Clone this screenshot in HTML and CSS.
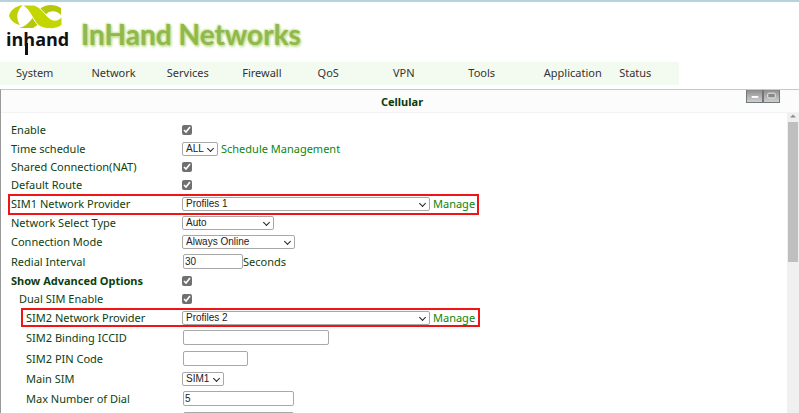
FILE: index.html
```html
<!DOCTYPE html>
<html lang="en">
<head>
<meta charset="utf-8">
<title>InHand Networks - Cellular</title>
<link rel="stylesheet" href="styles.css">
</head>
<body>
<header class="banner">
  <div class="logo">
    <svg class="logo-mark" viewBox="0 0 54 24" aria-hidden="true">
      <path fill="#bdd008" d="M14 0C6 1 1 6 0 11C2 16 6 19 11 20C7 14 7 6 14 0Z"/>
      <path fill="#b4c80c" d="M10 23H24C32 19 34 10 40 7C45 5 49 7 52 10V3C46-1 36-1 31 4C24 11 20 21 10 23Z"/>
      <path fill="#c3d600" stroke="#fff" stroke-width="1" d="M13 0H25C34 3 37 13 44 15C48 16 50 14 53 12V20C47 25 35 25 29 20C23 14 21 4 13 0Z"/>
    </svg>
    <span class="logo-word">inhand</span>
  </div>
  <h1 class="brand">InHand Networks</h1>
</header>
<nav class="menu">
  <a href="#system">System</a><a href="#network">Network</a><a href="#services">Services</a><a href="#firewall">Firewall</a><a href="#qos">QoS</a><a href="#vpn">VPN</a><a href="#tools">Tools</a><a href="#application">Application</a><a href="#status">Status</a>
</nav>
<main class="panel">
  <div class="titlebar">
    <h2>Cellular</h2>
    <div class="window-buttons">
      <button type="button" aria-label="Minimize"><svg viewBox="0 0 16 12"><path d="M5 7h7" stroke="#fff" stroke-width="2"/></svg></button><button type="button" aria-label="Maximize"><svg viewBox="0 0 16 12"><rect x="4" y="3" width="8" height="5" rx="1" fill="#888" stroke="#eee"/></svg></button>
    </div>
  </div>
  <div class="body">
    <form class="form">
      <div class="row"><label for="enable">Enable</label><div class="field"><input type="checkbox" id="enable" checked></div></div>
      <div class="row pick"><label for="schedule">Time schedule</label><div class="field"><span class="select w-mini"><select id="schedule"><option>ALL</option></select></span><a href="#schedule">Schedule Management</a></div></div>
      <div class="row"><label for="nat">Shared Connection(NAT)</label><div class="field"><input type="checkbox" id="nat" checked></div></div>
      <div class="row"><label for="route">Default Route</label><div class="field"><input type="checkbox" id="route" checked></div></div>
      <div class="row pick marked"><label for="sim1">SIM1 Network Provider</label><div class="field"><span class="select w-wide"><select id="sim1"><option>Profiles 1</option></select></span><a href="#profiles">Manage</a></div></div>
      <div class="row pick"><label for="type">Network Select Type</label><div class="field"><span class="select w-small"><select id="type"><option>Auto</option></select></span></div></div>
      <div class="row pick"><label for="mode">Connection Mode</label><div class="field"><span class="select w-medium"><select id="mode"><option>Always Online</option></select></span></div></div>
      <div class="row entry"><label for="redial">Redial Interval</label><div class="field"><input type="text" class="i-mini" id="redial" value="30"><span>Seconds</span></div></div>
      <div class="row"><label class="strong" for="advanced">Show Advanced Options</label><div class="field"><input type="checkbox" id="advanced" checked></div></div>
      <div class="row"><label class="sub" for="dual">Dual SIM Enable</label><div class="field"><input type="checkbox" id="dual" checked></div></div>
      <div class="row pick marked nested"><label class="subsub" for="sim2">SIM2 Network Provider</label><div class="field"><span class="select w-wide"><select id="sim2"><option>Profiles 2</option></select></span><a href="#profiles">Manage</a></div></div>
      <div class="row entry"><label class="subsub" for="iccid">SIM2 Binding ICCID</label><div class="field"><input type="text" class="i-wide" id="iccid"></div></div>
      <div class="row entry"><label class="subsub" for="pin">SIM2 PIN Code</label><div class="field"><input type="text" class="i-small" id="pin"></div></div>
      <div class="row pick"><label class="subsub" for="main">Main SIM</label><div class="field"><span class="select w-tiny"><select id="main"><option>SIM1</option></select></span></div></div>
      <div class="row entry"><label class="subsub" for="dial">Max Number of Dial</label><div class="field"><input type="text" class="i-medium" id="dial" value="5"></div></div>
      <div class="row entry"><span></span><div class="field"><input type="text" class="i-medium" aria-label="Next setting"></div></div>
    </form>
    <div class="scrollbar" aria-hidden="true"><svg class="arrow" viewBox="0 0 12 9"><path d="M3 6L6 3L9 6Z" fill="#8c8c8c"/></svg><div class="thumb"></div></div>
  </div>
</main>
</body>
</html>
```
FILE: styles.css
```css
*, *::before, *::after { box-sizing: border-box; }
body {
  margin: 0;
  height: 100vh;
  overflow: hidden;
  display: flex;
  flex-direction: column;
  background: #fff;
  color: #0d3f10;
  font: 11px/18px "Noto Sans", sans-serif;
}
a { color: #0c860c; text-decoration: none; }

.banner {
  flex: none;
  display: flex;
  gap: 11px;
  height: 60px;
  padding: 3px 0 0 6px;
  border-top: 2px solid #b4d3da;
  margin-bottom: 2px;
}
.logo { position: relative; width: 64px; }
.logo-mark { display: block; width: 54px; height: 24px; margin-left: 3px; }
.logo-word {
  display: block;
  margin-top: -2px;
  color: #111;
  font: bold 18px/24px "Open Sans", sans-serif;
}
.logo-word::after {
  content: "";
  position: absolute;
  left: 19px;
  top: 38px;
  width: 3px;
  height: 12px;
  background: #111;
}
.brand {
  margin: 11px 0 0;
  color: #91b84a;
  font: bold 28px/36px Lato, sans-serif;
  text-shadow: 0 0 2px #c4df96, 1px 1px 2px #c4df96, -1px -1px 2px #d6eab5, 1px 2px 3px #cfe3ae;
}

.menu {
  flex: none;
  display: grid;
  grid-template-columns: repeat(8, 1fr) 60px;
  width: 85%;
  padding-left: 16px;
  background: #f3fbf0;
  line-height: 22px;
  padding-bottom: 1px;
}
.menu a { color: #333; }

.panel {
  flex: 1;
  min-height: 0;
  display: flex;
  flex-direction: column;
  margin-top: 4px;
  border-top: 1px solid #c5c9c5;
  border-left: 1px solid #999;
}
.titlebar {
  flex: none;
  position: relative;
  height: 23px;
  background: #fcfcfc;
  border-bottom: 1px solid #f3f3f3;
}
.titlebar h2 {
  margin: 0;
  padding-left: 4px;
  color: #0a3a0a;
  font-size: 11px;
  line-height: 24px;
  text-align: center;
}
.window-buttons { position: absolute; right: 19px; top: 0; display: flex; }
.window-buttons button {
  width: 17px;
  height: 13px;
  padding: 0;
  border: 1px solid #71787b;
  border-top: 0;
  background: linear-gradient(#8c8c8c, #cfcfcf);
}
.window-buttons svg { display: block; width: 100%; height: 100%; }

.body { flex: 1; min-height: 0; display: flex; overflow: hidden; }
.form { flex: 1; padding: 8px 0 0 10px; }
.row {
  display: grid;
  grid-template-columns: 171px 1fr;
  align-items: center;
  position: relative;
  height: 18px;
}
.pick { height: 19px; }
.entry { height: 21px; }
.field { display: flex; align-items: center; }
.strong { font-weight: bold; }
.sub { padding-left: 8px; }
.subsub { padding-left: 15px; }
.marked::after {
  content: "";
  position: absolute;
  left: -3px;
  top: 0;
  width: 471px;
  height: 21px;
  border: 2px solid #f01414;
  pointer-events: none;
}
.nested::after { left: 10px; width: 459px; height: 19px; }

input[type="checkbox"] {
  width: 10px;
  height: 10px;
  margin: 0;
  accent-color: #707070;
}
input[type="text"], select {
  border: 1px solid #a8a8a8;
  border-radius: 2px;
  background: #fff;
  color: #222;
  font: 10px/12px "Liberation Sans", sans-serif;
}
input[type="text"] { height: 15px; margin-left: 1px; padding: 0 1px; }
.select { position: relative; display: block; margin-right: 3px; }
select {
  appearance: none;
  display: block;
  width: 100%;
  height: 14px;
  padding: 0 3px;
}
.select::after {
  content: "";
  position: absolute;
  right: 5px;
  top: 4px;
  width: 5px;
  height: 5px;
  border: solid #222;
  border-width: 0 1px 1px 0;
  transform: rotate(45deg);
  pointer-events: none;
}
.w-mini { width: 36px; }
.w-tiny { width: 42px; }
.w-small { width: 92px; }
.w-medium { width: 113px; }
.w-wide { width: 248px; }
.i-mini { width: 60px; }
.i-small { width: 65px; }
.i-medium { width: 111px; }
.i-wide { width: 146px; }

.scrollbar { flex: none; width: 12px; margin-top: -3px; background: #f0f0f0; }
.arrow { display: block; width: 12px; height: 12px; }
.thumb { height: 140px; margin: 0 1px; background: #bfbfbf; }
```
